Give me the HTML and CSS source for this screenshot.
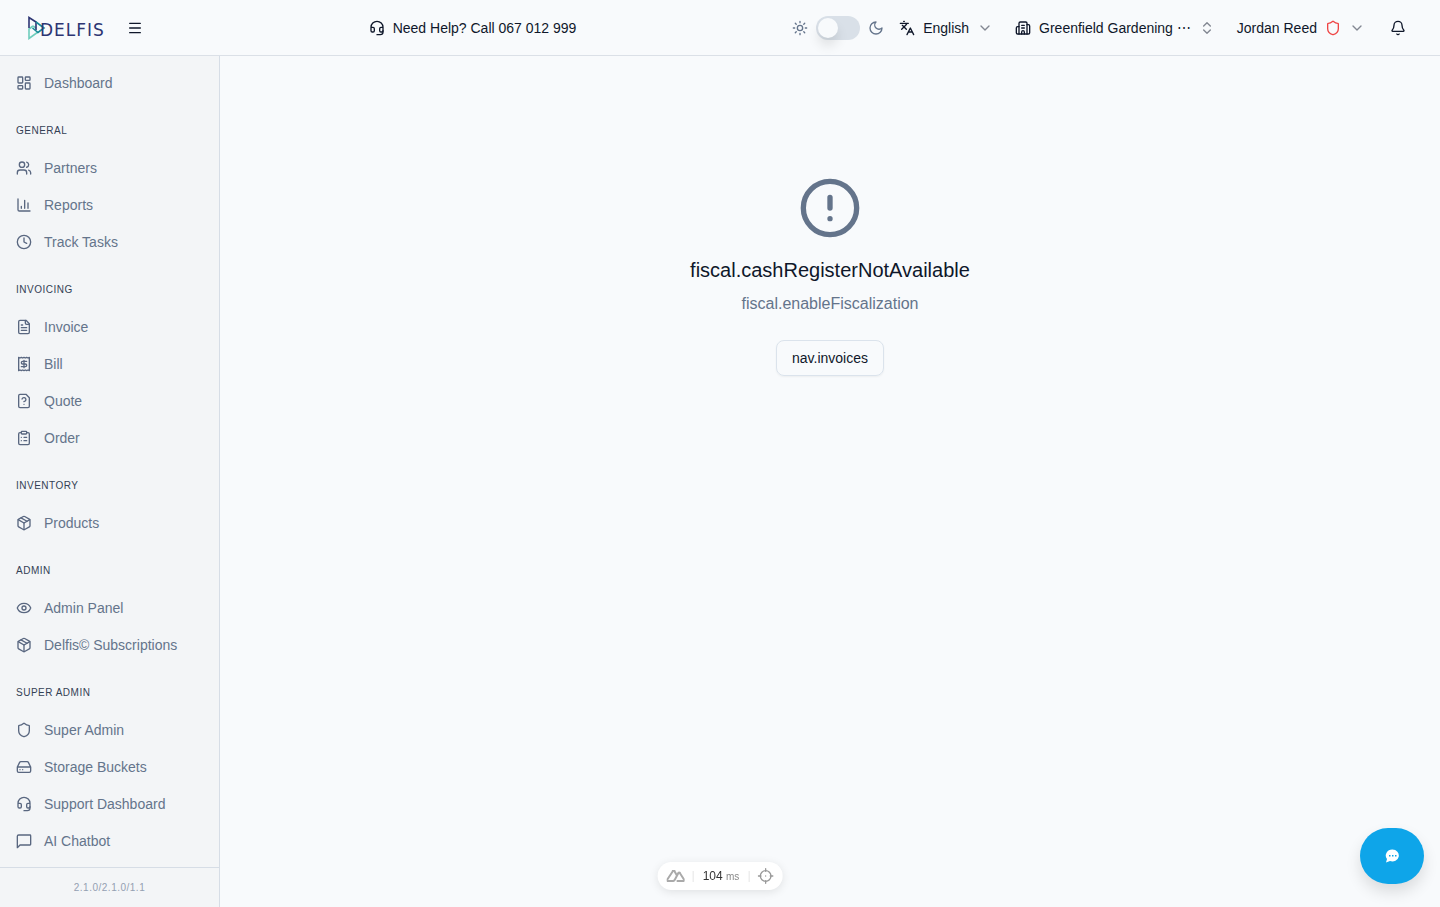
FILE: index.html
```html
<!DOCTYPE html>
<html lang="en">
<head>
    <meta charset="UTF-8">
    <title>Delfis</title>
    <meta name="viewport" content="width=device-width, initial-scale=1.0">
    <link rel="stylesheet" href="styles.css">
</head>
<body>
    <!-- shared icons -->
    <svg class="sprite" aria-hidden="true">
        <symbol id="headset" viewBox="0 0 24 24"><path d="M3 11h3a2 2 0 0 1 2 2v3a2 2 0 0 1-2 2H5a2 2 0 0 1-2-2v-5Zm0 0a9 9 0 1 1 18 0m0 0v5a2 2 0 0 1-2 2h-1a2 2 0 0 1-2-2v-3a2 2 0 0 1 2-2h3Z"/><path d="M21 16v2a4 4 0 0 1-4 4h-5"/></symbol>
        <symbol id="chevron" viewBox="0 0 24 24"><path d="m6 9 6 6 6-6"/></symbol>
        <symbol id="shield" viewBox="0 0 24 24"><path d="M20 13c0 5-3.500 7.500-7.660 8.950a1 1 0 0 1-.67-.01C7.500 20.500 4 18 4 13V6a1 1 0 0 1 1-1c2 0 4.500-1.200 6.240-2.720a1.170 1.170 0 0 1 1.520 0C14.510 3.810 17 5 19 5a1 1 0 0 1 1 1z"/></symbol>
        <symbol id="package" viewBox="0 0 24 24"><path d="M11 21.730a2 2 0 0 0 2 0l7-4A2 2 0 0 0 21 16V8a2 2 0 0 0-1-1.730l-7-4a2 2 0 0 0-2 0l-7 4A2 2 0 0 0 3 8v8a2 2 0 0 0 1 1.730z"/><path d="M12 22V12"/><path d="m3.300 7 8.700 5 8.700-5"/><path d="m7.500 4.270 9 5.150"/></symbol>
    </svg>

    <header class="topbar">
        <div class="topbar-left">
            <a href="#" class="logo">
                <svg class="logo-mark" viewBox="0 0 18 24" fill="none" stroke-width="1.600">
                    <path stroke="#6fcdbc" d="M5 10 1 13v9.500l9-6.500M5 10l3 2"/>
                    <path stroke="#2d3573" d="M1 12V1.500L8 6v8"/>
                    <path stroke="#178a97" d="m8 6 8 6-6 4.500L4.500 12"/>
                </svg>
                <span class="logo-text">DELFIS</span>
            </a>
            <button class="icon-btn" aria-label="Menu">
                <svg class="icon" viewBox="0 0 24 24"><path d="M4 5h16M4 12h16M4 19h16"/></svg>
            </button>
        </div>
        <a href="#" class="top-btn">
            <svg class="icon"><use href="#headset"/></svg>
            <span>Need Help? Call 067 012 999</span>
        </a>
        <div class="topbar-right">
            <div class="theme">
                <svg class="icon" viewBox="0 0 24 24"><circle cx="12" cy="12" r="4"/><path d="M12 2v2M12 20v2M4.930 4.930l1.410 1.410M17.660 17.660l1.410 1.410M2 12h2M20 12h2M6.340 17.660l-1.410 1.410M19.070 4.930l-1.410 1.410"/></svg>
                <input type="checkbox" class="switch" role="switch" aria-label="Dark mode">
                <svg class="icon" viewBox="0 0 24 24"><path d="M12 3a6 6 0 0 0 9 9 9 9 0 1 1-9-9Z"/></svg>
            </div>
            <button class="top-btn">
                <svg class="icon" viewBox="0 0 24 24"><path d="m5 8 6 6M4 14l6-6 2-3M2 5h12M7 2h1M22 22l-5-10-5 10M14 18h6"/></svg>
                <span>English</span>
                <svg class="icon muted"><use href="#chevron"/></svg>
            </button>
            <button class="top-btn">
                <svg class="icon" viewBox="0 0 24 24"><path d="M10 12h4M10 8h4M14 21v-3a2 2 0 0 0-4 0v3"/><path d="M6 10H4a2 2 0 0 0-2 2v7a2 2 0 0 0 2 2h16a2 2 0 0 0 2-2V9a2 2 0 0 0-2-2h-2"/><path d="M6 21V5a2 2 0 0 1 2-2h8a2 2 0 0 1 2 2v16"/></svg>
                <span class="company-name">Greenfield Gardening ⋯</span>
                <svg class="icon muted" viewBox="0 0 24 24"><path d="m7 15 5 5 5-5M7 9l5-5 5 5"/></svg>
            </button>
            <button class="top-btn">
                <span>Jordan Reed</span>
                <svg class="icon danger"><use href="#shield"/></svg>
                <svg class="icon muted"><use href="#chevron"/></svg>
            </button>
            <button class="icon-btn bell" aria-label="Notifications">
                <svg class="icon" viewBox="0 0 24 24"><path d="M10.270 21a2 2 0 0 0 3.460 0"/><path d="M3.260 15.330A1 1 0 0 0 4 17h16a1 1 0 0 0 .74-1.670C19.410 13.960 18 12.500 18 8A6 6 0 0 0 6 8c0 4.500-1.410 5.960-2.740 7.330"/></svg>
            </button>
        </div>
    </header>

    <div class="layout">
        <aside class="sidebar">
            <nav class="nav">
                <a href="#"><svg class="icon" viewBox="0 0 24 24"><rect width="7" height="9" x="3" y="3" rx="1"/><rect width="7" height="5" x="14" y="3" rx="1"/><rect width="7" height="9" x="14" y="12" rx="1"/><rect width="7" height="5" x="3" y="16" rx="1"/></svg>Dashboard</a>

                <h2>General</h2>
                <a href="#"><svg class="icon" viewBox="0 0 24 24"><path d="M16 21v-2a4 4 0 0 0-4-4H6a4 4 0 0 0-4 4v2"/><circle cx="9" cy="7" r="4"/><path d="M22 21v-2a4 4 0 0 0-3-3.870M16 3.130a4 4 0 0 1 0 7.750"/></svg>Partners</a>
                <a href="#"><svg class="icon" viewBox="0 0 24 24"><path d="M3 3v16a2 2 0 0 0 2 2h16M18 17V9M13 17V5M8 17v-3"/></svg>Reports</a>
                <a href="#"><svg class="icon" viewBox="0 0 24 24"><circle cx="12" cy="12" r="10"/><path d="M12 6v6l4 2"/></svg>Track Tasks</a>

                <h2>Invoicing</h2>
                <a href="#"><svg class="icon" viewBox="0 0 24 24"><path d="M15 2H6a2 2 0 0 0-2 2v16a2 2 0 0 0 2 2h12a2 2 0 0 0 2-2V7Z"/><path d="M14 2v4a2 2 0 0 0 2 2h4M10 9H8M16 13H8M16 17H8"/></svg>Invoice</a>
                <a href="#"><svg class="icon" viewBox="0 0 24 24"><path d="M4 2v20l2-1 2 1 2-1 2 1 2-1 2 1 2-1 2 1V2l-2 1-2-1-2 1-2-1-2 1-2-1-2 1Z"/><path d="M16 8h-6a2 2 0 1 0 0 4h4a2 2 0 1 1 0 4H8M12 17.500v-11"/></svg>Bill</a>
                <a href="#"><svg class="icon" viewBox="0 0 24 24"><path d="M15 2H6a2 2 0 0 0-2 2v16a2 2 0 0 0 2 2h12a2 2 0 0 0 2-2V7Z"/><path d="M12 17h.01M9.100 9a3 3 0 0 1 5.820 1c0 2-3 3-3 3"/></svg>Quote</a>
                <a href="#"><svg class="icon" viewBox="0 0 24 24"><rect width="8" height="4" x="8" y="2" rx="1"/><path d="M16 4h2a2 2 0 0 1 2 2v14a2 2 0 0 1-2 2H6a2 2 0 0 1-2-2V6a2 2 0 0 1 2-2h2M12 11h4M12 16h4M8 11h.01M8 16h.01"/></svg>Order</a>

                <h2>Inventory</h2>
                <a href="#"><svg class="icon"><use href="#package"/></svg>Products</a>

                <h2>Admin</h2>
                <a href="#"><svg class="icon" viewBox="0 0 24 24"><path d="M2.060 12.350a1 1 0 0 1 0-.7 10.750 10.750 0 0 1 19.880 0 1 1 0 0 1 0 .7 10.750 10.750 0 0 1-19.880 0"/><circle cx="12" cy="12" r="3"/></svg>Admin Panel</a>
                <a href="#"><svg class="icon"><use href="#package"/></svg>Delfis© Subscriptions</a>

                <h2>Super Admin</h2>
                <a href="#"><svg class="icon"><use href="#shield"/></svg>Super Admin</a>
                <a href="#"><svg class="icon" viewBox="0 0 24 24"><path d="M22 12H2M5.450 5.110 2 12v6a2 2 0 0 0 2 2h16a2 2 0 0 0 2-2v-6l-3.450-6.890A2 2 0 0 0 16.760 4H7.240a2 2 0 0 0-1.790 1.110zM6 16h.01M10 16h.01"/></svg>Storage Buckets</a>
                <a href="#"><svg class="icon"><use href="#headset"/></svg>Support Dashboard</a>
                <a href="#"><svg class="icon" viewBox="0 0 24 24"><path d="M21 3H4a2 2 0 0 0-2 2v17l4-4h15a1 1 0 0 0 1-1V4a1 1 0 0 0-1-1z"/></svg>AI Chatbot</a>
            </nav>
            <div class="version">2.1.0/2.1.0/1.1</div>
        </aside>

        <main class="content">
            <svg class="alert-icon" viewBox="0 0 24 24"><circle cx="12" cy="12" r="10"/><path d="M12 8v4M12 16h.01"/></svg>
            <h1>fiscal.cashRegisterNotAvailable</h1>
            <p>fiscal.enableFiscalization</p>
            <button class="outline-btn">nav.invoices</button>
        </main>
    </div>

    <div class="devtools">
        <button aria-label="DevTools">
            <svg class="nuxt" viewBox="0 0 18 12"><path d="M10 11h6a1 1 0 0 0 1-2l-3.500-5.500a1 1 0 0 0-2 0L8 10a2 2 0 0 1-2 1H2a1 1 0 0 1-1-2L6 1.500a1 1 0 0 1 2 0L10 5"/></svg>
        </button>
        <span class="load-time">104 <small>ms</small></span>
        <button aria-label="Inspect">
            <svg class="icon" viewBox="0 0 24 24"><circle cx="12" cy="12" r="8"/><path d="M12 1v4M12 19v4M1 12h4M19 12h4M12 12h.01"/></svg>
        </button>
    </div>

    <button class="chat-btn" aria-label="Chat">
        <svg viewBox="0 0 16 16"><path fill="#fff" d="M8.500 1.500a6.500 6 0 1 1-2.500 11.600L2 14.500l1-3.500A6.500 6 0 0 1 8.500 1.500Z"/><path fill="#0ea5e9" d="M5 7h1.500v1.500H5zM8 7h1.500v1.500H8zM11 7h1.500v1.500H11z"/></svg>
    </button>
</body>
</html>
```
FILE: styles.css
```css
* {
    box-sizing: border-box;
}
body {
    margin: 0;
    min-height: 100vh;
    display: flex;
    flex-direction: column;
    font-family: "Liberation Sans", Arial, sans-serif;
    font-size: 14px;
    line-height: 20px;
    color: #0f172a;
    background-color: #f8fafc;
}
a {
    color: inherit;
    text-decoration: none;
}
button {
    font: inherit;
    color: inherit;
    background: none;
    border: none;
    padding: 0;
    cursor: pointer;
}
svg {
    flex-shrink: 0;
}
.sprite {
    display: none;
}
.icon {
    width: 16px;
    height: 16px;
    fill: none;
    stroke: currentColor;
    stroke-width: 2;
    stroke-linecap: round;
    stroke-linejoin: round;
}
.muted {
    opacity: 0.5;
}
.danger {
    color: #ef4444;
}

/* top bar */
.topbar {
    display: flex;
    align-items: center;
    justify-content: space-between;
    height: 56px;
    padding: 0 24px 0 28px;
    border-bottom: 1px solid #dbe0e7;
}
.topbar-left,
.topbar-right,
.theme {
    display: flex;
    align-items: center;
}
.topbar-left {
    gap: 12px;
}
.logo {
    display: flex;
    align-items: center;
}
.logo-mark {
    width: 18px;
    height: 24px;
    margin-right: -6px;
}
.logo-text {
    font-family: "DejaVu Sans", sans-serif;
    font-size: 17px;
    letter-spacing: 1px;
    color: #2d3573;
    padding-top: 4px;
}
.icon-btn {
    display: flex;
    align-items: center;
    justify-content: center;
    width: 36px;
    height: 36px;
}
.bell {
    margin-left: 4px;
}
.top-btn {
    display: flex;
    align-items: center;
    gap: 8px;
    height: 36px;
    padding: 0 11px;
}
.company-name {
    white-space: nowrap;
}
.theme {
    gap: 8px;
    margin-right: 4px;
    color: #64748b;
}
.switch {
    appearance: none;
    width: 44px;
    height: 24px;
    margin: 0;
    padding: 2px;
    border-radius: 12px;
    background-color: #d9e0e8;
    cursor: pointer;
}
.switch::before {
    content: "";
    display: block;
    width: 20px;
    height: 20px;
    border-radius: 50%;
    background-color: #f8fafc;
    box-shadow: 0 8px 12px rgba(0, 0, 0, 0.1);
}
.switch:checked::before {
    margin-left: 20px;
}

/* sidebar */
.layout {
    display: flex;
    flex: 1;
}
.sidebar {
    display: flex;
    flex-direction: column;
    width: 220px;
    background-color: #f3f5f7;
    border-right: 1px solid #d6dde6;
}
.nav {
    flex: 1;
    padding: 8px 16px;
}
.nav a {
    display: flex;
    align-items: center;
    gap: 12px;
    height: 37px;
    color: #64748b;
}
.nav .icon {
    color: #596780;
}
.nav h2 {
    margin: 20px 0 8px;
    font-size: 10px;
    font-weight: 400;
    line-height: 20px;
    letter-spacing: 0.05em;
    text-transform: uppercase;
    color: #334155;
}
.version {
    height: 40px;
    border-top: 1px solid #d6dde6;
    font-size: 10px;
    line-height: 39px;
    letter-spacing: 0.05em;
    text-align: center;
    color: #94a0b2;
}

/* page */
.content {
    flex: 1;
    display: flex;
    flex-direction: column;
    align-items: center;
    padding-top: 120px;
}
.alert-icon {
    width: 64px;
    height: 64px;
    fill: none;
    stroke: #64748b;
    stroke-width: 2;
    stroke-linecap: round;
}
.content h1 {
    margin: 16px 0 8px;
    font-size: 20px;
    font-weight: 400;
    line-height: 28px;
}
.content p {
    margin: 0 0 24px;
    font-size: 16px;
    line-height: 24px;
    color: #64748b;
}
.outline-btn {
    height: 36px;
    padding: 0 15px;
    border: 1px solid #dbe3ec;
    border-radius: 8px;
    box-shadow: 0 1px 2px rgba(0, 0, 0, 0.05);
}

/* floating widgets */
.devtools {
    position: fixed;
    bottom: 17px;
    left: 50%;
    transform: translateX(-50%);
    display: flex;
    align-items: center;
    height: 28px;
    padding: 0 9px;
    border-radius: 14px;
    background-color: #fff;
    color: #999;
    box-shadow: 0 2px 10px rgba(0, 0, 0, 0.1);
}
.devtools button {
    display: flex;
}
.nuxt {
    width: 18px;
    height: 12px;
    fill: none;
    stroke: #aaa;
    stroke-width: 2;
}
.load-time {
    margin: 0 8px;
    padding: 0 9px;
    border-left: 1px solid #e5e5e5;
    border-right: 1px solid #e5e5e5;
    font-size: 12px;
    line-height: 10px;
    color: #333;
}
.load-time small {
    font-size: 10px;
    color: #888;
}
.chat-btn {
    position: fixed;
    right: 16px;
    bottom: 23px;
    display: flex;
    align-items: center;
    justify-content: center;
    width: 64px;
    height: 56px;
    border-radius: 28px;
    background-color: #0ea5e9;
    box-shadow: 0 8px 15px rgba(0, 0, 0, 0.12);
}
.chat-btn svg {
    width: 16px;
    height: 16px;
}
```
